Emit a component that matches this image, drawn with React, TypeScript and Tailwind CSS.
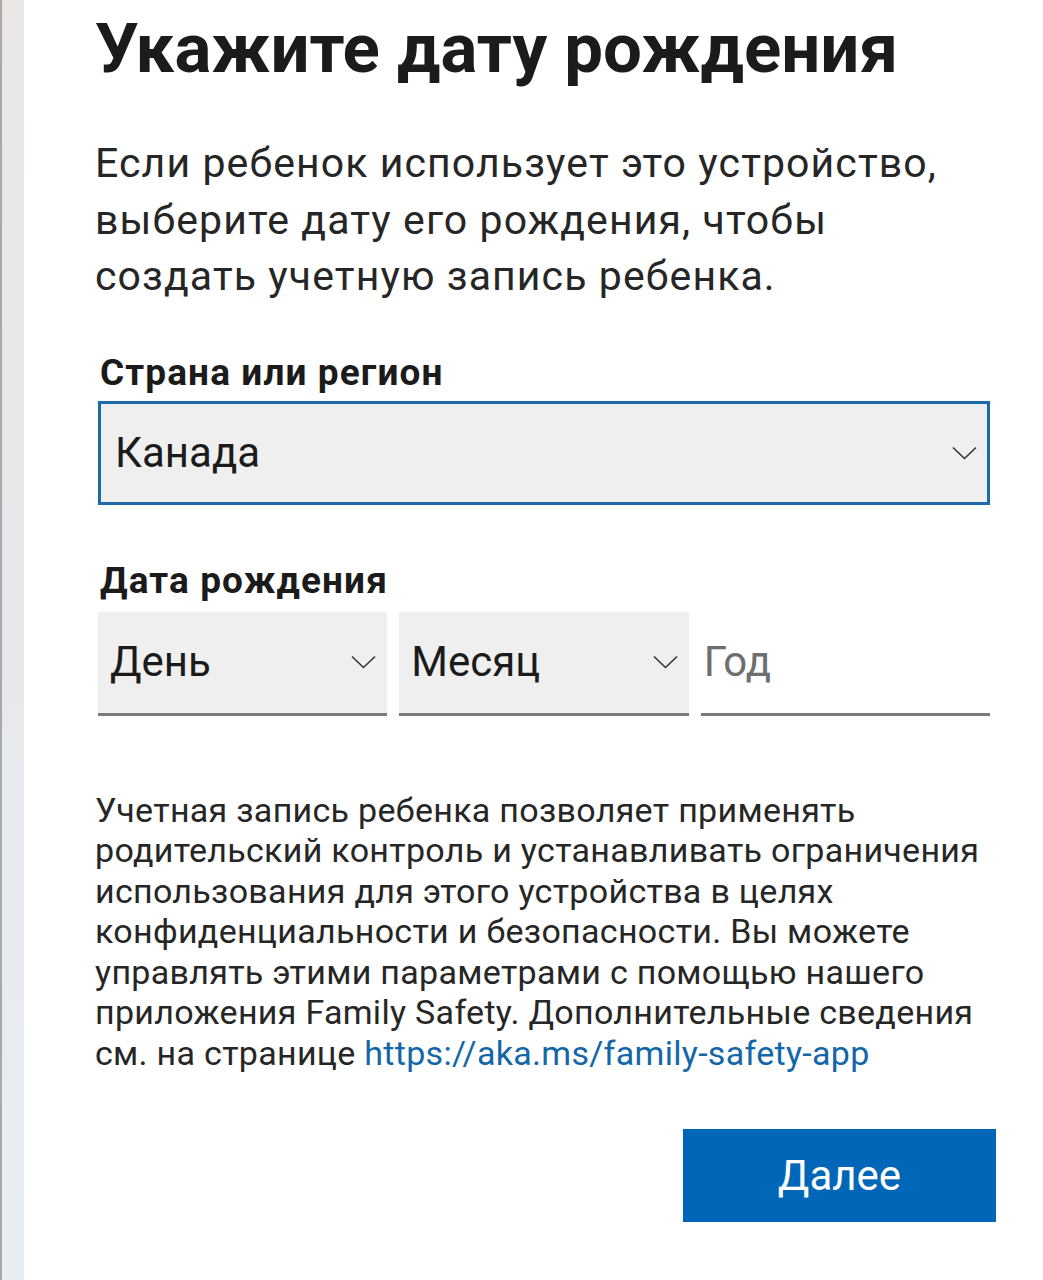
import { ReactNode } from 'react';

const font = { fontFamily: 'Roboto, "Noto Sans", sans-serif' };

function Chevron() {
  return (
    <svg width="25" height="14" viewBox="0 0 25 14" fill="none" className="shrink-0">
      <path d="M1 1.5 L12.5 12.5 L24 1.5" stroke="#333" strokeWidth="1.6" />
    </svg>
  );
}

function DateSelect({ children }: { children: ReactNode }) {
  return (
    <div className="flex h-[104px] items-center justify-between border-b-[3px] border-[#7a7a7a] bg-[#efefef] pl-[12px] pr-[11px]">
      <span className="text-[42px] leading-none text-[#1b1b1b]">{children}</span>
      <Chevron />
    </div>
  );
}

export default function App() {
  return (
    <div className="flex min-h-[1280px] bg-white" style={font}>
      <div className="w-[24px] shrink-0 border-l-2 border-[#a9a9a9] bg-gradient-to-b from-[#eae7e5] via-[#e6e8ec] to-[#e7eef2]" />

      <main className="flex-1 pl-[71px] pr-[53px] pt-[14px]">
        <h1 className="text-[69px] font-bold leading-none text-[#1b1b1b]">Укажите дату рождения</h1>

        <p className="mt-[52px] text-[41px] leading-[56.5px] tracking-[1.1px] text-[#262626]">
          Если ребенок использует это устройство, выберите дату его рождения, чтобы создать учетную запись ребенка.
        </p>

        <label className="mt-[48px] block pl-[5px] text-[37px] font-bold leading-[40px] tracking-[1.1px] text-[#1b1b1b]">
          Страна или регион
        </label>
        <div className="mt-[8px] ml-[3px] flex h-[104px] items-center justify-between border-[3px] border-[#1d6aaa] bg-[#efefef] pl-[14px] pr-[10px]">
          <span className="text-[42px] leading-none text-[#1b1b1b]">Канада</span>
          <Chevron />
        </div>

        <label className="mt-[56px] block pl-[5px] text-[37px] font-bold leading-[40px] tracking-[1.1px] text-[#1b1b1b]">
          Дата рождения
        </label>
        <div className="mt-[11px] ml-[3px] grid grid-cols-3 gap-[12px]">
          <DateSelect>День</DateSelect>
          <DateSelect>Месяц</DateSelect>
          <div className="flex h-[104px] items-center border-b-[3px] border-[#7a7a7a] bg-white pl-[3px]">
            <span className="text-[42px] leading-none text-[#6e6e6e]">Год</span>
          </div>
        </div>

        <p className="mt-[74px] text-[34px] leading-[40.5px] tracking-[0.3px] text-[#262626]">
          Учетная запись ребенка позволяет применять родительский контроль и устанавливать ограничения использования для этого устройства в целях конфиденциальности и безопасности. Вы можете управлять этими параметрами с помощью нашего приложения Family Safety. Дополнительные сведения см. на странице{' '}
          <a className="text-[#1366a8]">https://aka.ms/family-safety-app</a>
        </p>

        <div className="mt-[56px] -mr-[6px] flex justify-end">
          <button className="h-[93px] w-[313px] bg-[#0067b8] text-[42px] leading-none text-white">Далее</button>
        </div>
      </main>
    </div>
  );
}
